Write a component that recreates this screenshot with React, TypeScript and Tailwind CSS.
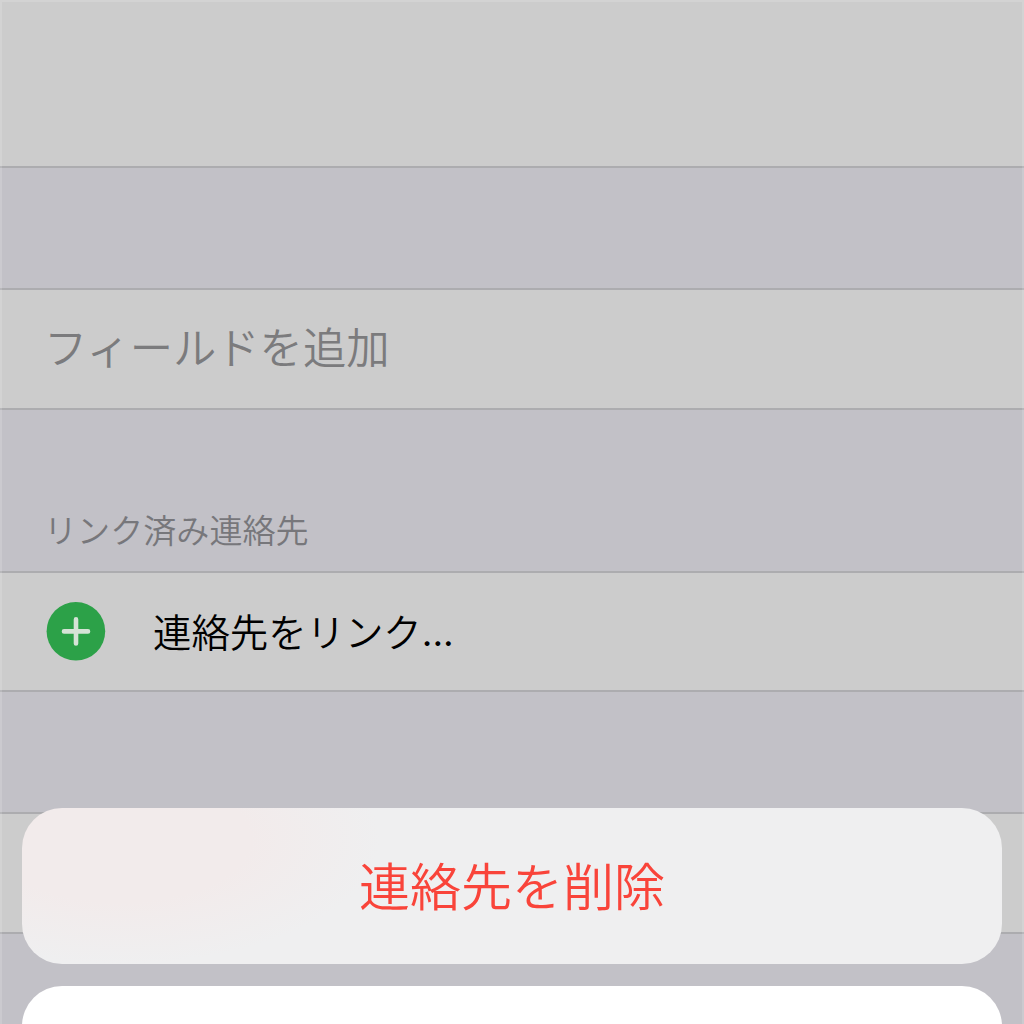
const cjk = "font-['Noto_Sans_CJK_JP',sans-serif] font-[350] whitespace-nowrap";

function PlusBadge() {
  return (
    <svg className="h-[60px] w-[60px] shrink-0" viewBox="0 0 60 60">
      <circle cx="29.9" cy="29.3" r="29.3" fill="#2ca148" />
      <path d="M30 17.4v24M18 29.4h24" stroke="#d5e3d6" strokeWidth="4.6" strokeLinecap="round" />
    </svg>
  );
}

export default function App() {
  return (
    <div className={`relative h-[1024px] w-[1024px] overflow-hidden bg-[#c2c1c7] ${cjk}`}>
      <div className="flex flex-col">
        <div className="h-[168px] border-b-2 border-[#acacaf] bg-[#cccccc]" />
        <div className="h-[120px]" />
        <div className="flex h-[122px] items-center border-y-2 border-[#acacaf] bg-[#cccccc] pb-[7px] pl-[44px]">
          <span className="text-[43.3px] leading-none text-[#7b7b7d]">フィールドを追加</span>
        </div>
        <div className="flex h-[161px] items-end pb-[25px] pl-[44px]">
          <span className="text-[33.1px] leading-none text-[#77777b]">リンク済み連絡先</span>
        </div>
        <div className="flex h-[121px] items-center gap-[47px] border-y-2 border-[#acacaf] bg-[#cccccc] pl-[46px]">
          <PlusBadge />
          <span className="text-[38.4px] leading-none text-black">
            連絡先をリンク
            <span className="relative -top-px font-['Inter',sans-serif] text-[37px] leading-none font-normal">...</span>
          </span>
        </div>
        <div className="h-[120px]" />
        <div className="h-[122px] border-y-2 border-[#acacaf] bg-[#cccccc]" />
      </div>

      {/* lighter rim of the dimmed page */}
      <div className="pointer-events-none absolute inset-0 border-x-2 border-t-2 border-white/15" />

      {/* action sheet */}
      <div className="absolute inset-x-[22px] top-[808px] flex flex-col gap-[22px]">
        <button className="flex h-[156px] w-full items-center justify-center rounded-[40px] bg-[#efeff0] bg-[radial-gradient(ellipse_260px_125px_at_10%_20%,#f2ebeb_50%,#efeff0_100%)] pb-[4px] text-[51px] leading-none text-[#f9443a]">
          連絡先を削除
        </button>
        <button className="h-[156px] w-full rounded-[40px] bg-white" />
      </div>
    </div>
  );
}
